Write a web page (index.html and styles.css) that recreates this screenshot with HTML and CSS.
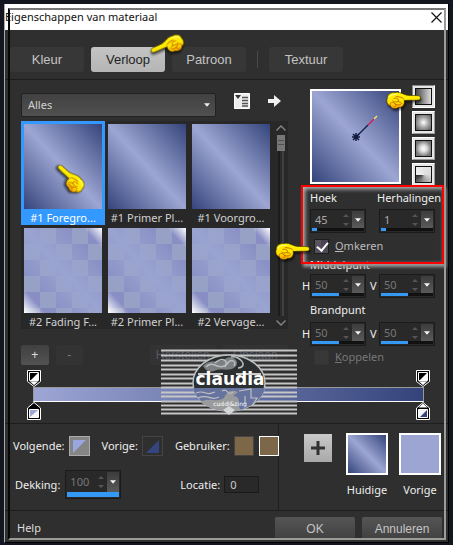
FILE: index.html
```html
<!DOCTYPE html>
<html lang="nl">
<head>
<meta charset="utf-8">
<meta name="viewport" content="width=device-width, initial-scale=1">
<title>Eigenschappen van materiaal</title>
<link rel="stylesheet" href="styles.css">
</head>
<body>
<svg class="defs" aria-hidden="true">
  <defs>
    <linearGradient id="skin" x1="0" y1="0" x2="0" y2="1">
      <stop offset="0" stop-color="#fff200"/><stop offset=".6" stop-color="#ffe600"/><stop offset="1" stop-color="#f59a00"/>
    </linearGradient>
    <symbol id="hand" viewBox="0 0 34 19">
      <path d="M32 5.500C34 6 34 9 32 9.500C27 10 22 9.500 18 10C19 13 17 17 13 16.500C10 18.500 6 18 5 15C2 14.500 1 11 2 8C2 4 6 2 9 2.500C13 1 17 4 21 5C25 5.500 29 5 32 5.500Z" fill="url(#skin)" stroke="#3a2c00" stroke-width=".6"/>
      <path d="M10 6C13 7 16 6 18 9M8 8C11 7 14 9 12 11C10 12 8 11 7 10M12 11C15 11 17 13 14 14C11 15 9 13 8 12M5 15C4 13 6 11 8 12C11 14 11 16 8 16" fill="none" stroke="#c46a00" stroke-width=".9"/>
      <path d="M4 7C5 4 9 4 11 4" fill="none" stroke="#fffb8a" stroke-width="1"/>
    </symbol>
    <symbol id="down" viewBox="0 0 7 4"><path d="M0 0H7L3.500 4Z" fill="currentColor"/></symbol>
    <symbol id="updown" viewBox="0 0 8 14"><path d="M1 4L4 1L7 4ZM1 10H7L4 13Z" fill="currentColor"/></symbol>
    <symbol id="stop-top" viewBox="0 0 14 17">
      <path d="M.5 .5H13.500V11.500L7 16.500L.5 11.500Z" fill="#000" stroke="#fff"/>
      <path d="M2 11L7 15.500L12 11Z" fill="#fff" stroke="#000" stroke-width=".6"/>
      <path d="M2.500 2.500H11.500V10.500H2.500Z" fill="#000" stroke="#fff"/><path d="M11 3V10H4Z" fill="#fff"/>
    </symbol>
  </defs>
</svg>

<div class="dialog">
  <header class="titlebar">
    <h1>Eigenschappen van materiaal</h1>
    <button class="close" aria-label="Sluiten"><svg width="11" height="11" viewBox="0 0 11 11"><path d="M.5 .5L10.500 10.500M10.500 .5L.5 10.500" stroke="#111" stroke-width="1.200"/></svg></button>
  </header>

  <nav class="tabs">
    <button>Kleur</button>
    <button class="active">Verloop</button>
    <button>Patroon</button>
    <i class="divider"></i>
    <button>Textuur</button>
    <svg class="hand hand-tab"><use href="#hand"/></svg>
  </nav>

  <main class="workspace">
    <section class="library">
      <div class="toolbar">
        <select aria-label="Categorie"><option>Alles</option></select>
        <svg class="select-arrow" width="6" height="4"><use href="#down"/></svg>
        <button class="icon-button" aria-label="Weergave"><svg width="16" height="16" viewBox="0 0 16 16"><path d="M.5 .5H15.500V15.500H.5Z" fill="#ececec" stroke="#fff"/><path d="M1 2H7L4 6Z" fill="#333"/><path d="M8 4.500H14M8 7.500H14M8 10.500H14M8 13H14" stroke="#555" stroke-width="1.500"/></svg></button>
        <button class="icon-button" aria-label="Menu"><svg width="13" height="12" viewBox="0 0 13 12"><path d="M0 4H6V0L13 6L6 12V8H0Z" fill="#f1f1f1"/></svg></button>
      </div>

      <div class="browser">
        <div class="swatches">
          <button class="item selected"><span class="thumb"></span>#1 Foregro...</button>
          <button class="item"><span class="thumb"></span>#1 Primer Pl...</button>
          <button class="item"><span class="thumb"></span>#1 Voorgro...</button>
          <button class="item"><span class="thumb fading"></span>#2 Fading F...</button>
          <button class="item"><span class="thumb fading"></span>#2 Primer Pl...</button>
          <button class="item"><span class="thumb fading"></span>#2 Vervage...</button>
        </div>
        <div class="scrollbar">
          <svg width="10" height="6" viewBox="0 0 10 6"><path d="M.5 5.500L5 1L9.500 5.500" fill="none" stroke="#888" stroke-width="1.300"/></svg>
          <div class="track"><div class="grip"></div></div>
          <svg width="10" height="6" viewBox="0 0 10 6"><path d="M.5 .5L5 5L9.500 .5" fill="none" stroke="#888" stroke-width="1.300"/></svg>
        </div>
        <svg class="hand hand-item"><use href="#hand"/></svg>
      </div>

      <div class="actions">
        <button class="add">+</button>
        <button class="remove" disabled>-</button>
        <button class="wide" disabled>Herstellen</button>
        <button class="wide" disabled>Opslaan</button>
      </div>
    </section>

    <section class="settings">
      <div class="preview-row">
        <div class="preview"><svg width="85" height="89" viewBox="0 0 85 89"><path d="M44 46L56 34" stroke="#141b42" stroke-width="1.200"/><path d="M56 34L62 28" stroke="#d8174b" stroke-width="1.200"/><path d="M62 28L65 25" stroke="#f3ef62" stroke-width="1.200"/><path d="M44 42V50M40 46H48M41 43L47 49M47 43L41 49" stroke="#141b42" stroke-width="1.500"/></svg></div>
        <div class="modes">
          <button class="mode linear pressed" aria-label="Lineair"><i></i></button>
          <button class="mode square" aria-label="Rechthoekig"><i></i></button>
          <button class="mode radial" aria-label="Straal"><i></i></button>
          <button class="mode conic" aria-label="Kegel"><i></i></button>
        </div>
        <svg class="hand hand-mode"><use href="#hand"/></svg>
      </div>

      <div class="fields">
        <label class="c2" for="hoek">Hoek</label>
        <label class="c4 herh" for="herh">Herhalingen</label>
        <div class="spinner c2"><input id="hoek" value="45"><svg class="steps"><use href="#updown"/></svg><button aria-label="Hoek kiezen"><svg width="6" height="4"><use href="#down"/></svg></button><div class="meter"><i class="low"></i></div></div>
        <div class="spinner c4"><input id="herh" value="1"><svg class="steps"><use href="#updown"/></svg><button aria-label="Herhalingen kiezen"><svg width="6" height="4"><use href="#down"/></svg></button><div class="meter"><i class="low"></i></div></div>
        <label class="check"><input type="checkbox" checked><span><u>O</u>mkeren</span></label>
        <span class="group">Middelpunt</span>
        <label for="mh">H</label>
        <div class="spinner off"><input id="mh" value="50" disabled><svg class="steps"><use href="#updown"/></svg><button disabled aria-label="Middelpunt H"><svg width="6" height="4"><use href="#down"/></svg></button><div class="meter"><i class="half"></i></div></div>
        <label class="axis-v" for="mv">V</label>
        <div class="spinner off"><input id="mv" value="50" disabled><svg class="steps"><use href="#updown"/></svg><button disabled aria-label="Middelpunt V"><svg width="6" height="4"><use href="#down"/></svg></button><div class="meter"><i class="half"></i></div></div>
        <span class="group">Brandpunt</span>
        <label for="bh">H</label>
        <div class="spinner off"><input id="bh" value="50" disabled><svg class="steps"><use href="#updown"/></svg><button disabled aria-label="Brandpunt H"><svg width="6" height="4"><use href="#down"/></svg></button><div class="meter"><i class="half"></i></div></div>
        <label class="axis-v" for="bv">V</label>
        <div class="spinner off"><input id="bv" value="50" disabled><svg class="steps"><use href="#updown"/></svg><button disabled aria-label="Brandpunt V"><svg width="6" height="4"><use href="#down"/></svg></button><div class="meter"><i class="half"></i></div></div>
        <label class="check muted"><input type="checkbox" disabled><span><u>K</u>oppelen</span></label>
        <div class="highlight"></div>
        <svg class="hand hand-check"><use href="#hand"/></svg>
      </div>
    </section>
  </main>

  <section class="ramp">
    <div class="stops"><svg width="14" height="17"><use href="#stop-top"/></svg><svg width="14" height="17"><use href="#stop-top"/></svg></div>
    <div class="bar"></div>
    <div class="stops">
      <svg width="14" height="18" viewBox="0 0 14 18"><path d="M.5 6L7 .5L13.500 6V17.500H.5Z" fill="#000" stroke="#fff"/><path d="M2.500 7.500H11.500V15.500H2.500Z" fill="#f5f5f5" stroke="#fff"/><path d="M3 8H11L3 15Z" fill="#9da7d4"/></svg>
      <svg width="14" height="18" viewBox="0 0 14 18"><path d="M.5 6L7 .5L13.500 6V17.500H.5Z" fill="#000" stroke="#fff"/><path d="M2.500 5.500L7 1.500L11.500 5.500Z" fill="#fff"/><path d="M2.500 7.500H11.500V15.500H2.500Z" fill="#f5f5f5" stroke="#fff"/><path d="M11 8V15H4Z" fill="#34457f"/></svg>
    </div>
    <svg class="brand" width="136" height="66" viewBox="0 0 136 66">
      <path d="M0 1.500H136M0 6.500H136M0 11.500H136M0 16.500H136M0 20.500H136M0 25.500H136M0 29.500H136M0 34.500H136M0 38.500H136M0 43.500H136M0 47.500H136M0 52.500H136M0 56.500H136M0 60.500H136M0 64.500H136" stroke="#c5c6c5" stroke-width="1.800"/>
      <ellipse cx="68" cy="34" rx="36" ry="28" fill="#2c2f2f" stroke="#bfc2c3" stroke-width="1.500"/>
      <path d="M32 39H104C101 52 86 62 68 62S35 52 32 39Z" fill="#66739f"/>
      <path d="M42 17C49 9 57 15 64 10C70 5 79 11 75 17C69 24 60 18 53 22C47 24 44 20 42 17Z" fill="#7d8082"/>
      <path d="M45 18C52 10 58 23 66 15C70 9 76 12 73 17M70 8C79 6 88 18 77 19M54 14C62 7 68 12 64 18" fill="none" stroke="#b9bcbc" stroke-width="1.500"/>
      <path d="M39 53C49 48 55 54 63 49C66 43 69 40 77 43L72 47C82 48 74 54 80 61L68 62C57 62 46 58 39 53Z" fill="#999b9d"/>
      <path d="M35 44C45 40 43 48 54 43M37 49C48 44 50 53 58 48M78 42L90 40V49H96L91 57M84 47V55M61 42C67 38 66 48 72 43" fill="none" stroke="#bfc1c4" stroke-width="1.200"/>
      <path d="M37 25H62M75 25H100" stroke="#fff" stroke-width="1.500"/>
      <text x="69" y="36" text-anchor="middle" class="brand-name">claudia</text>
      <text x="69" y="57" text-anchor="middle" class="brand-sub">cuddl&amp;zing</text>
      <path d="M68 57L74 61L68 66L62 61Z" fill="#d5d6d6"/>
    </svg>
  </section>

  <section class="details">
    <div class="stop-props">
      <div class="line">
        <span>Volgende:</span><button class="chip next" aria-label="Volgende"><svg width="15" height="15" viewBox="0 0 15 15"><path d="M1 1H14L1 14Z" fill="#9aa6df"/></svg></button>
        <span class="before">Vorige:</span><button class="chip prev" aria-label="Vorige"><svg width="15" height="15" viewBox="0 0 15 15"><path d="M14 1V14H1Z" fill="#34457f"/></svg></button>
        <span class="before">Gebruiker:</span><button class="chip user" aria-label="Kleur 1"></button><button class="chip user current" aria-label="Kleur 2"></button>
      </div>
      <div class="line second">
        <label for="dek">Dekking:</label>
        <div class="spinner off tall"><input id="dek" value="100" disabled><svg class="steps"><use href="#updown"/></svg><button disabled aria-label="Dekking kiezen"><svg width="6" height="4"><use href="#down"/></svg></button><div class="meter"><i class="full"></i></div></div>
        <label class="location" for="loc">Locatie:</label><input class="number" id="loc" value="0">
      </div>
    </div>
    <div class="compare">
      <button class="plus" aria-label="Toevoegen"><svg width="14" height="14" viewBox="0 0 14 14"><path d="M7 0V14M0 7H14" stroke="#333" stroke-width="3"/></svg></button>
      <figure><div class="sample gradient"></div><figcaption>Huidige</figcaption></figure>
      <figure><div class="sample"></div><figcaption>Vorige</figcaption></figure>
    </div>
  </section>

  <footer class="footer">
    <a href="#help">Help</a>
    <button>OK</button>
    <button>Annuleren</button>
  </footer>
</div>
</body>
</html>
```
FILE: styles.css
```css
* { box-sizing: border-box; }
:root {
  --ui: "Noto Sans", "Open Sans", sans-serif;
  --mirror: linear-gradient(to top right, #34447b, #9da6d3 50%, #34447b);
}
body {
  margin: 0;
  padding: 4px;
  min-height: 100vh;
  background: #14161f;
  color: #eee;
  font: 11px/16px var(--ui);
}
button, input, select { font: inherit; color: inherit; margin: 0; padding: 0; border: 0; background: none; }
svg { display: block; }
.defs { position: absolute; width: 0; height: 0; }

.dialog {
  position: relative;
  background: #2f2f2f;
  border: 1px solid #000;
  border-top: 0;
  border-left-color: #aaa;
}
.dialog::after {
  content: "";
  position: absolute;
  inset: 4px 2px 2px 3px;
  border: 2px solid #9b9c9a;
  border-top-color: #777;
  border-left-color: #080808;
  pointer-events: none;
}
.titlebar { display: flex; justify-content: space-between; align-items: center; height: 26px; background: #fff; color: #111; }
.titlebar h1 { margin: 0; font-size: 11px; font-weight: 400; }
.titlebar .close { margin-right: 6px; }

.tabs { position: relative; display: flex; align-items: center; gap: 7px; padding: 17px 5px 7px; border-bottom: 1px solid #1e1e1e; font: 13px/16px "Liberation Sans", sans-serif; }
.tabs button { width: 74px; height: 25px; background: #373737; color: #c4c4c4; border-radius: 3px; }
.tabs .active { background: linear-gradient(#c4c4c4, #b5b5b5); color: #222; }
.tabs .divider { width: 1px; height: 17px; margin: 0 4px; background: #4a4a4a; }

.workspace { display: grid; grid-template-columns: minmax(0, 1fr) 152px; }
.library { padding: 13px 8px 0 16px; }
.toolbar { position: relative; display: flex; align-items: flex-start; height: 28px; }
.toolbar select { appearance: none; width: 195px; height: 24px; padding-left: 6px; background: linear-gradient(#414141, #505050); border: 1px solid #222; border-radius: 2px; color: #d0d0d0; }
.select-arrow { position: absolute; left: 183px; top: 10px; pointer-events: none; }
.icon-button { margin-left: 18px; height: 16px; }

.browser { position: relative; display: flex; background: #282828; }
.swatches { display: grid; grid-template-columns: repeat(3, 84px); }
.item { display: block; height: 104px; padding: 3px 3px 0; color: #d2d2d2; line-height: 17px; text-align: center; white-space: nowrap; }
.item.selected { background: #3399ff; color: #fff; }
.thumb { display: block; height: 85px; background: var(--mirror); }
.fading {
  background:
    linear-gradient(to top right, #fff, #fff0 14%, #fff0 88%, #fff),
    linear-gradient(to top right, #9aa4d000 20%, #9aa4d0 50%, #9aa4d000 80%),
    conic-gradient(#898fc4 25%, #97a1c5 0 50%, #898fc4 0 75%, #97a1c5 0) 16px 0 / 32px 32px;
}
.scrollbar { flex: 1; display: flex; flex-direction: column; align-items: center; justify-content: space-between; padding: 4px 0 3px; }
.track { flex: 1; width: 8px; margin: 4px 0; background: linear-gradient(90deg, #282828 1px, #1c1c1c 1px 3px, #2c2c2c 3px 5px, #404040 5px 7px, #282828 7px); }
.grip { height: 16px; background: repeating-linear-gradient(#777 0 2px, #505050 2px 3px, #777 3px 4px); border: solid #777; border-width: 3px 1px; }

.actions { display: flex; gap: 7px; padding-top: 16px; font: 12px/16px "Liberation Sans", sans-serif; }
.actions button { width: 29px; height: 20px; background: #333; color: #777; border-radius: 2px; }
.actions .add { background: linear-gradient(#404040, #535353); color: #ddd; }
.actions .wide { width: 69px; color: #555b66; }
.actions .remove + .wide { margin-left: 60px; }

.settings { padding-top: 5px; }
.preview-row { position: relative; display: flex; gap: 11px; padding-left: 14px; height: 103px; }
.preview { width: 91px; height: 95px; margin-top: 4px; border: 2px solid #fff; background: var(--mirror); }
.modes { display: grid; gap: 3px; align-content: start; }
.mode { width: 23px; height: 23px; padding: 2px; background: #e6e6e6; border: 1px solid #fff; border-right-color: #999; border-bottom-color: #999; }
.mode.pressed { border-color: #888 #fff #fff #888; }
.mode i { display: block; height: 17px; border: 1px solid #111; }
.linear i { background: linear-gradient(90deg, #484848, #ddd); }
.square i { background: radial-gradient(#fff, #aaa 45%, #555); }
.radial i { background: radial-gradient(circle, #fff, #ddd 30%, #777 75%); }
.conic i { background: conic-gradient(from 270deg, #eee, #ddd 50%, #999 75%, #222); }

.fields {
  position: relative;
  display: grid;
  grid-template-columns: 8px 56px 13px 56px;
  grid-template-rows: 20px 26px 24px 14px 28px 20px 28px 18px;
  align-items: center;
  padding-left: 6px;
}
.fields label, .group { white-space: nowrap; }
.fields .axis-v { padding-left: 4px; }
.c2 { grid-column: 2; }
.fields .c4 { grid-column: 4; }
.fields .herh { margin-left: -2px; }
.group, .check { grid-column: 2 / -1; }
.check { display: flex; align-items: center; gap: 6px; padding-left: 4px; color: #bbb; }
.check input { appearance: none; width: 15px; height: 15px; background: #444; border: 1px solid #1d1d1d; }
.check input:checked { background: conic-gradient(#494352, #5b5560); }
.check input:checked::after { content: ""; display: block; width: 5px; height: 9px; margin: 0 4px; border: solid #fff; border-width: 0 2px 2px 0; transform: rotate(40deg); }
.muted { color: #777; }
.muted input { background: #383838; border-color: #333; }

.spinner { display: grid; grid-template-columns: minmax(0, 1fr) 8px 12px; grid-template-rows: 1fr 3px; column-gap: 2px; width: 56px; height: 24px; padding: 1px; border: 1px solid #1b1b1b; background: #292929; color: #aaa; }
.spinner input { width: 100%; padding-left: 3px; }
.steps { width: 8px; height: 14px; align-self: center; color: #555; }
.spinner button { display: grid; place-items: center; background: linear-gradient(#3c3c3c, #5a5a5a); color: #f5f5f5; }
.off { color: #777; }
.meter { grid-column: 1 / -1; background: #111; }
.meter i { display: block; height: 100%; background: #3399f5; }
.meter .low { width: 10%; }
.meter .half { width: 51%; }
.meter .full { width: 100%; }
.tall { height: 29px; grid-template-rows: 1fr 5px; }

.highlight { position: absolute; left: 5px; top: -3px; width: 143px; height: 79px; border: 2px solid #f00; box-shadow: 2px 3px 3px #999, inset 2px 2px 4px #bbb; pointer-events: none; }

.ramp { position: relative; padding: 4px 18px 3px 22px; border-bottom: 1px solid #1e1e1e; }
.stops { display: flex; justify-content: space-between; }
.bar { height: 15px; margin: 0 6px; border: 1px solid #999; border-bottom-color: #fff; background: linear-gradient(90deg, #9da6d5, #34447b); }
.ramp .brand { position: absolute; left: 156px; top: -17px; }
.brand-name { font: 700 17px "DejaVu Sans", sans-serif; fill: #fff; }
.brand-sub { font: 6px "DejaVu Sans", sans-serif; fill: #fff; }

.details { display: grid; grid-template-columns: minmax(0, 1fr) 169px; border-bottom: 1px solid #1e1e1e; height: 87px; }
.stop-props { padding: 12px 3px 0 8px; border-right: 1px solid #1e1e1e; }
.line { display: flex; align-items: center; }
.line > span, .line > label { white-space: nowrap; }
.chip { display: grid; place-items: center; flex: none; width: 21px; height: 20px; margin-left: 4px; border: 1px solid #444; }
.chip.next { background: #858585; border-color: #aaa; }
.before { margin-left: 12px; }
.chip.user { width: 20px; background: #7c6748; }
.chip.current { margin-left: 5px; border-color: #fff; }
.second { padding: 14px 0 0 2px; }
.second .spinner { margin-left: 5px; }
.second .location { margin-left: 59px; }
.number { width: 35px; height: 17px; margin-left: 4px; padding-left: 5px; border: 1px solid #1a1a1a; background: #292929; color: #ccc; }
.compare { display: flex; gap: 11px; padding: 9px 7px 0 25px; }
.plus { display: grid; place-items: center; flex: none; width: 28px; height: 28px; margin: 1px 3px 0 0; background: linear-gradient(#c9c9c9, #a9a9a9); }
figure { margin: 0; text-align: center; }
.sample { width: 42px; height: 42px; border: 2px solid #fff; background: #9da6d3; }
.sample.gradient { background: var(--mirror); }
figcaption { margin-top: 7px; }

.footer { display: flex; align-items: flex-start; gap: 7px; padding: 6px 6px 2px 12px; }
.footer a { flex: 1; padding-top: 3px; color: #ddd; text-decoration: none; }
.footer button { width: 80px; height: 23px; background: linear-gradient(#555, #404040); border-radius: 2px; color: #c4c4c4; font: 12px/16px "Liberation Sans", sans-serif; }

.hand { position: absolute; width: 36px; height: 20px; filter: drop-shadow(1px 2px 1px #0009); pointer-events: none; }
.hand-tab { left: 145px; top: 6px; transform: rotate(-24deg) scaleX(-1); }
.hand-item { left: 31px; top: 48px; transform: rotate(42deg) scaleX(-1); }
.hand-mode { left: 89px; top: 5px; }
.hand-check { left: -22px; top: 53px; }
```
